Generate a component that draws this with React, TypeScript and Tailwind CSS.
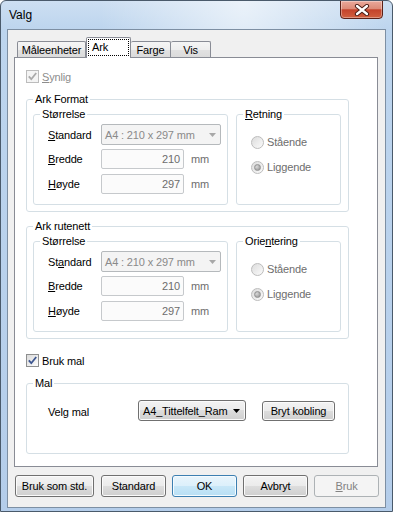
import React from "react";

type C = { children?: React.ReactNode; className?: string };

const U = ({ children }: C) => (
  <span className="underline decoration-1 underline-offset-[1px]">{children}</span>
);

function Group({ label, className = "", children }: C & { label: React.ReactNode }) {
  return (
    <fieldset className={`m-0 min-w-0 border border-[#d5dfe5] rounded-[3px] ${className}`}>
      <legend className="ml-[6px] px-[2px] h-[14px] leading-[14px]">{label}</legend>
      {children}
    </fieldset>
  );
}

function CheckBox({ disabled }: { disabled?: boolean }) {
  return (
    <span
      className={`w-[13px] h-[13px] border flex items-center justify-center shrink-0 ${
        disabled
          ? "border-[#bcbcbc] bg-[#f4f4f4]"
          : "border-[#8e8f8f] bg-[linear-gradient(135deg,#dadada,#fdfdfd)]"
      }`}
    >
      <svg width="11" height="11" viewBox="0 0 11 11">
        <path
          d="M1.8 5.4 L4.3 8.2 L9.2 2"
          fill="none"
          stroke={disabled ? "#a9a9a9" : "#3d5690"}
          strokeWidth="1.8"
        />
      </svg>
    </span>
  );
}

function Radio({ checked }: { checked?: boolean }) {
  return (
    <span className="w-[13px] h-[13px] rounded-full border border-[#bcbcbc] bg-[linear-gradient(135deg,#dcdcdc,#fbfbfb)] flex items-center justify-center shrink-0">
      {checked && (
        <span className="w-[7px] h-[7px] rounded-full border border-[#929292] bg-[radial-gradient(circle_at_35%_35%,#dadada,#8c8c8c)]" />
      )}
    </span>
  );
}

function SizeGroup({ std }: { std: React.ReactNode }) {
  return (
    <Group label="Størrelse" className="w-[195px] h-[98px] shrink-0">
      <div className="flex flex-col pl-[14px] pt-[3px]">
        <div className="flex items-center h-[21px]">
          <span className="w-[53px]">{std}</span>
          <div className="w-[120px] h-[21px] border border-[#b5b9bc] rounded-[2px] bg-[#f4f4f4] flex items-center pl-[3px] pr-[4px] text-[#8a8a8a]">
            <span className="flex-1">A4 : 210 x 297 mm</span>
            <svg width="7" height="4" viewBox="0 0 7 4">
              <path d="M0 0 H7 L3.5 4Z" fill="#a8a8a8" />
            </svg>
          </div>
        </div>
        <div className="flex items-center h-[20px] mt-[4px]">
          <span className="w-[53px]">
            <U>B</U>redde
          </span>
          <div className="w-[83px] h-[20px] border border-[#c6c9cc] rounded-[2px] bg-[#fbfbfb] flex items-center justify-end pr-[3px] text-[#6d6d6d]">
            210
          </div>
          <span className="ml-[7px] text-[#6d6d6d]">mm</span>
        </div>
        <div className="flex items-center h-[20px] mt-[5px]">
          <span className="w-[53px]">
            <U>H</U>øyde
          </span>
          <div className="w-[83px] h-[20px] border border-[#c6c9cc] rounded-[2px] bg-[#fbfbfb] flex items-center justify-end pr-[3px] text-[#6d6d6d]">
            297
          </div>
          <span className="ml-[7px] text-[#6d6d6d]">mm</span>
        </div>
      </div>
    </Group>
  );
}

function OrientGroup({ label }: { label: React.ReactNode }) {
  return (
    <Group label={label} className="w-[105px] h-[98px] shrink-0">
      <div className="flex flex-col pl-[14px] pt-[13px] gap-[9px]">
        <div className="flex items-center h-[16px]">
          <Radio />
          <span className="ml-[3px] text-[#6d6d6d]">Stående</span>
        </div>
        <div className="flex items-center h-[16px]">
          <Radio checked />
          <span className="ml-[3px] text-[#6d6d6d]">Liggende</span>
        </div>
      </div>
    </Group>
  );
}

const btn =
  "h-[22px] border border-[#707070] rounded-[3px] bg-[linear-gradient(#f3f3f3_0%,#ebebeb_50%,#dddddd_50%,#cfcfcf_100%)] shadow-[inset_0_0_0_1px_#fbfbfb] flex items-center justify-center";

export default function App() {
  return (
    <div className="font-['Liberation_Sans',Arial,sans-serif] text-[11px] leading-[14px] text-black tracking-[-0.15px]">
      <div className="w-[393px] h-[512px] flex flex-col border border-[#4a5a6b] rounded-t-[6px] overflow-hidden bg-[radial-gradient(ellipse_at_62%_0%,rgba(255,255,255,0.6),rgba(255,255,255,0)_42%),linear-gradient(180deg,#cddff2_0px,#bdd5ee_28px,#b4cdea_100%)]">
        <div className="flex h-[28px] justify-between shrink-0">
          <span className="pl-[8px] pt-[6px] text-[12px] leading-[16px] tracking-normal">Valg</span>
          <div className="mr-[9px] -mt-px w-[43px] h-[19px] border border-[#5b2118] rounded-b-[4px] bg-[linear-gradient(#eaa99b_0%,#dd8b78_45%,#c4432b_52%,#d1603f_100%)] shadow-[inset_0_0_0_1px_rgba(255,255,255,0.35)] flex items-center justify-center">
            <svg width="16" height="12" viewBox="0 0 16 12">
              <path d="M3 2 L13 10 M13 2 L3 10" stroke="#4a1d16" strokeWidth="4.2" strokeLinecap="round" />
              <path d="M3 2 L13 10 M13 2 L3 10" stroke="#ffffff" strokeWidth="2.3" strokeLinecap="round" />
            </svg>
          </div>
        </div>
        <div className="mx-[6px] h-[479px] shrink-0 border border-[#7d8fa3] bg-[#f0f0f0] flex flex-col px-[6px] pt-[7px]">
          <div className="flex items-end h-[20px] pl-[3px]">
            <div className="w-[69px] h-[16px] border border-b-0 border-[#898c95] rounded-t-[2px] bg-[linear-gradient(#f5f5f5,#eeeeee_50%,#e2e2e2_50%,#dbdbdb)] flex items-center justify-center">
              Måleenheter
            </div>
            <div className="relative z-10 -mb-px w-[45px] h-[21px] border border-b-0 border-[#898c95] rounded-t-[2px] bg-white flex justify-center pt-[1px]">
              <span className="w-[41px] h-[17px] border border-dotted border-black flex items-center pl-[3px] pb-[1px]">
                Ark
              </span>
            </div>
            <div className="w-[40px] h-[16px] border border-b-0 border-l-0 border-[#898c95] rounded-t-[2px] bg-[linear-gradient(#f5f5f5,#eeeeee_50%,#e2e2e2_50%,#dbdbdb)] flex items-center justify-center">
              Farge
            </div>
            <div className="w-[40px] h-[16px] border border-b-0 border-l-0 border-[#898c95] rounded-t-[2px] bg-[linear-gradient(#f5f5f5,#eeeeee_50%,#e2e2e2_50%,#dbdbdb)] flex items-center justify-center">
              Vis
            </div>
          </div>
          <div className="h-[410px] w-[364px] shrink-0 bg-white border border-[#898c95] flex flex-col pl-[11px] pt-[12px]">
            <div className="flex items-center h-[13px]">
              <CheckBox disabled />
              <span className="ml-[3px] text-[#8d8d8d]">
                <U>S</U>ynlig
              </span>
            </div>
            <Group label="Ark Format" className="w-[323px] h-[120px] mt-[9px] shrink-0">
              <div className="flex gap-[8px] pl-[6px] pt-[1px]">
                <SizeGroup
                  std={
                    <>
                      <U>S</U>tandard
                    </>
                  }
                />
                <OrientGroup
                  label={
                    <>
                      <U>R</U>etning
                    </>
                  }
                />
              </div>
            </Group>
            <Group label="Ark rutenett" className="w-[323px] h-[120px] mt-[7px] shrink-0">
              <div className="flex gap-[8px] pl-[6px] pt-[1px]">
                <SizeGroup
                  std={
                    <>
                      St<U>a</U>ndard
                    </>
                  }
                />
                <OrientGroup
                  label={
                    <>
                      Orie<U>n</U>tering
                    </>
                  }
                />
              </div>
            </Group>
            <div className="flex items-center h-[13px] mt-[15px]">
              <CheckBox />
              <span className="ml-[3px]">Bruk mal</span>
            </div>
            <Group label="Mal" className="w-[323px] h-[78px] mt-[9px] shrink-0">
              <div className="flex items-center pl-[21px] mt-[10px]">
                <span className="w-[90px] pt-[2px]">Velg mal</span>
                <div className="w-[108px] h-[21px] border border-[#707070] rounded-[3px] bg-[linear-gradient(#f3f3f3_0%,#ebebeb_50%,#dddddd_50%,#cfcfcf_100%)] shadow-[inset_0_0_0_1px_#fbfbfb] flex items-center pl-[4px] pr-[5px]">
                  <span className="flex-1">A4_Tittelfelt_Ram</span>
                  <svg width="7" height="4" viewBox="0 0 7 4">
                    <path d="M0 0 H7 L3.5 4Z" fill="#000" />
                  </svg>
                </div>
                <div className={`${btn} ml-[16px] w-[73px] !h-[20px]`}>Bryt kobling</div>
              </div>
            </Group>
          </div>
          <div className="flex mt-[8px] pl-[1px]">
            <div className={`${btn} w-[79px]`}>Bruk som std.</div>
            <div className={`${btn} w-[65px] ml-[7px]`}>Standard</div>
            <div className="h-[22px] w-[65px] ml-[6px] border border-[#3c7fb1] rounded-[3px] bg-[linear-gradient(#e9f5fc_0%,#dcf0fb_50%,#c8e7f8_50%,#b8dff4_100%)] shadow-[inset_0_0_0_1px_#f4fbff] flex items-center justify-center">
              OK
            </div>
            <div className={`${btn} w-[65px] ml-[6px]`}>Avbryt</div>
            <div className="h-[22px] w-[65px] ml-[6px] border border-[#adb2b5] rounded-[3px] bg-[#f4f4f4] flex items-center justify-center text-[#838383]">
              <U>B</U>ruk
            </div>
          </div>
        </div>
      </div>
    </div>
  );
}
